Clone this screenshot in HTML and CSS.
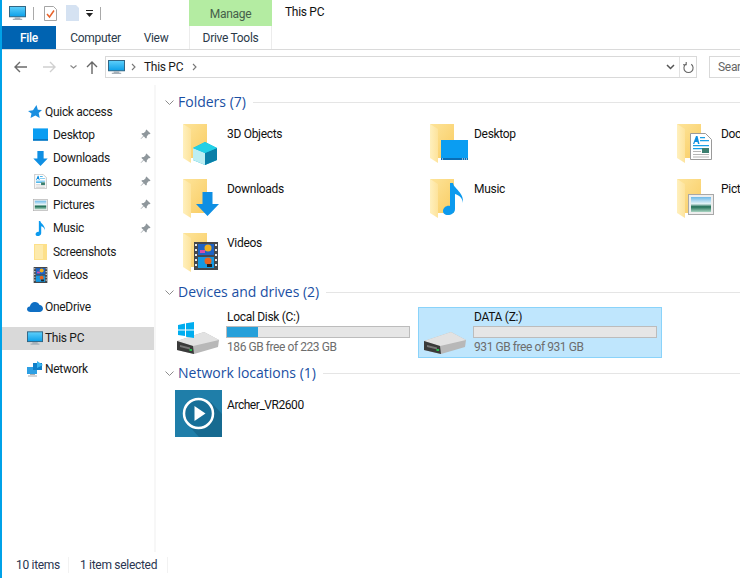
FILE: index.html
```html
<!DOCTYPE html>
<html lang="en">
<head>
<meta charset="utf-8">
<title>This PC</title>
<link rel="stylesheet" href="styles.css">
</head>
<body>
<svg class="defs" aria-hidden="true">
  <defs>
    <linearGradient id="fold" x1="0" y1="0" x2="1" y2="1"><stop offset="0" stop-color="#fde49a"/><stop offset="1" stop-color="#f9cc62"/></linearGradient>
    <linearGradient id="flap" x1="0" y1="0" x2="1" y2="0"><stop offset="0" stop-color="#fff0bd"/><stop offset="1" stop-color="#fde39c"/></linearGradient>
    <linearGradient id="scr" x1="0" y1="0" x2="0" y2="1"><stop offset="0" stop-color="#5fd0fb"/><stop offset="1" stop-color="#0b9fe8"/></linearGradient>
    <linearGradient id="sky" x1="0" y1="0" x2="0" y2="1"><stop offset="0" stop-color="#6db9e8"/><stop offset=".45" stop-color="#e4f3f6"/><stop offset=".65" stop-color="#1f6e55"/><stop offset="1" stop-color="#a9d5c2"/></linearGradient>
    <symbol id="folder" viewBox="0 0 48 48">
      <path d="M8 4h24v34H16v-2z" fill="url(#fold)"/>
      <path d="M8 4l8 5v34l-8-5z" fill="url(#flap)"/>
    </symbol>
    <symbol id="monitor" viewBox="0 0 18 16">
      <rect x=".5" y=".5" width="17" height="11" fill="url(#scr)" stroke="#2b5f7e"/>
      <path d="M6 12h6v1.500h2V15H4v-1.500h2z" fill="#a6b0b8"/>
    </symbol>
    <symbol id="film" viewBox="0 0 24 28">
      <rect width="24" height="28" fill="#45484c"/>
      <rect x="4" y="2" width="16" height="11" fill="#1e63c5"/>
      <rect x="4" y="15" width="16" height="11" fill="#1498e2"/>
      <circle cx="14" cy="6" r="3.500" fill="#f0b01e"/><circle cx="14" cy="19" r="3.500" fill="#e8641e"/>
      <rect x="6" y="8" width="5" height="3" fill="#d34fa8"/><rect x="13" y="22" width="5" height="3" fill="#222"/>
      <path d="M1 2h2v2H1zM1 7h2v2H1zM1 12h2v2H1zM1 17h2v2H1zM1 22h2v2H1zM21 2h2v2h-2zM21 7h2v2h-2zM21 12h2v2h-2zM21 17h2v2h-2zM21 22h2v2h-2z" fill="#e8e8e8"/>
    </symbol>
    <symbol id="docpage" viewBox="0 0 22 27">
      <path d="M.5.500h15l6 6v20H.5z" fill="#fff" stroke="#9a9a9a"/>
      <path d="M3 11l3-8h1.500l2 8H8l-.5-2H5l-.7 2z" fill="#0f8fe0"/>
      <path d="M10 4h5v1.200h-5zM10 7h9v1.200h-9zM3 12h16v1.300H3zM3 15h10v1.300H3z" fill="#19a0e6"/>
      <rect x="12" y="15" width="7" height="5" fill="#3b7f6f"/>
      <path d="M3 18h8v1H3zM3 21h16v1H3zM3 23.500h16v1H3z" fill="#b5b5b5"/>
    </symbol>
    <symbol id="picture" viewBox="0 0 26 21">
      <rect x=".5" y=".5" width="25" height="20" fill="#eee" stroke="#a8a8a8"/>
      <rect x="3" y="3" width="20" height="15" fill="url(#sky)"/>
    </symbol>
    <symbol id="note" viewBox="0 0 21 32">
      <path d="M7 0h3c1 6 11 9 10 20-.4-5-4-8-8-9v15c0 4-4 6-7 6-3.500 0-5-2-5-4 0-3.500 4-6 7-5z" fill="#0c9aee"/>
    </symbol>
    <symbol id="arrow" viewBox="0 0 23 24">
      <path d="M6.500 0h10v12H23L11.500 24 0 12h6.500z" fill="#0f8fe3"/>
    </symbol>
    <symbol id="drive" viewBox="0 0 48 48">
      <path d="M3 31L30 22l15 8-1 7-24 7-17-4z" fill="#b8b8b8"/>
      <path d="M3 31L30 22l15 8-26 6z" fill="#e2e2e2"/>
      <path d="M3 31l16 5 1 8-17-4z" fill="#3a3a3a"/>
      <path d="M6 35l10 2.500v2L6 37z" fill="#777"/>
      <rect x="15.500" y="39" width="2.500" height="2" fill="#27c24c"/>
    </symbol>
    <symbol id="pin" viewBox="0 0 12 12">
      <path d="M7 .5l4.500 4.500-1 .8-.8-.3L7.500 7.800 7.300 10 6 10 4.200 7.900 1 11l-.3-.3 3-3.300L1.800 5.700V4.500l2.400-.2 2.200-2.200-.2-.8z" fill="#8f979c"/>
    </symbol>
  </defs>
</svg>

<div class="window">
  <header class="head">
    <div class="titlerow">
      <div class="qat">
        <svg class="qat-mon"><use href="#monitor"/></svg>
        <span class="qat-sep"></span>
        <svg class="qat-check" viewBox="0 0 13 15"><path d="M.5.500h9l3 3v11H.5z" fill="#fff" stroke="#a5a5a5"/><path d="M3 8l2.500 3L10 4.500" fill="none" stroke="#e8622a" stroke-width="1.500"/></svg>
        <svg class="qat-doc" viewBox="0 0 13 16"><path d="M0 0h10l3 3v13H0z" fill="#d5e2f2"/></svg>
        <svg class="qat-drop" viewBox="0 0 7 7"><path d="M0 0h7v1H0zM0 3h7L3.500 7z" fill="#222"/></svg>
        <span class="qat-sep"></span>
      </div>
      <div class="manage">Manage</div>
      <div class="title">This PC</div>
    </div>
    <nav class="tabs">
      <div class="tab tab-file">File</div>
      <div class="tab tab-computer">Computer</div>
      <div class="tab tab-view">View</div>
      <div class="tab tab-drive">Drive Tools</div>
    </nav>
  </header>

  <div class="navrow">
    <div class="navbtns">
      <svg class="nav-back" viewBox="0 0 13 12"><path d="M13 6H1M6 1L1 6l5 5" fill="none" stroke="#6b6b6b" stroke-width="1.400"/></svg>
      <svg class="nav-fwd" viewBox="0 0 13 12"><path d="M0 6h12M7 1l5 5-5 5" fill="none" stroke="#d0d0d0" stroke-width="1.400"/></svg>
      <svg class="nav-down" viewBox="0 0 7 4"><path d="M.5.500L3.500 3l3-2.500" fill="none" stroke="#8a8a8a" stroke-width="1.200"/></svg>
      <svg class="nav-up" viewBox="0 0 12 13"><path d="M6 13V1M1 6l5-5 5 5" fill="none" stroke="#666" stroke-width="1.400"/></svg>
    </div>
    <div class="address">
      <svg class="addr-icon"><use href="#monitor"/></svg>
      <svg class="addr-chev" viewBox="0 0 5 8"><path d="M1 1l3 3-3 3" fill="none" stroke="#777" stroke-width="1.100"/></svg>
      <span class="addr-text">This PC</span>
      <svg class="addr-chev addr-chev2" viewBox="0 0 5 8"><path d="M1 1l3 3-3 3" fill="none" stroke="#777" stroke-width="1.100"/></svg>
      <svg class="addr-drop" viewBox="0 0 9 6"><path d="M1 1l3.500 3.500L8 1" fill="none" stroke="#555" stroke-width="1.500"/></svg>
      <div class="addr-refresh">
        <svg class="refresh-icon" viewBox="0 0 12 14"><path d="M3 3.500a5 5 0 1 0 6 0M3.500 1v3H0" fill="none" stroke="#666" stroke-width="1.200"/></svg>
      </div>
    </div>
    <div class="search">Search</div>
  </div>

  <div class="main">
    <aside class="side">
      <div class="row row-top">
        <svg class="ic-star" viewBox="0 0 14 14"><path d="M8.500 0l1.300 4.700 4.200.3-3.300 3 1 5-4.300-2.600L2.500 13l1-4.500L0 6l5-.7z" fill="#1a8fe0"/></svg>
        <span>Quick access</span>
      </div>
      <div class="row row-sub">
        <svg class="ic-box ic-desk" viewBox="0 0 16 13"><rect width="16" height="13" fill="#0a9df2"/><rect y="11.500" width="16" height="1.500" fill="#0a6db5"/></svg>
        <span class="grow">Desktop</span><svg class="pin"><use href="#pin"/></svg>
      </div>
      <div class="row row-sub">
        <svg class="ic-box ic-dl"><use href="#arrow"/></svg>
        <span class="grow">Downloads</span><svg class="pin"><use href="#pin"/></svg>
      </div>
      <div class="row row-sub">
        <svg class="ic-box ic-doc"><use href="#docpage"/></svg>
        <span class="grow">Documents</span><svg class="pin"><use href="#pin"/></svg>
      </div>
      <div class="row row-sub">
        <svg class="ic-box ic-pic"><use href="#picture"/></svg>
        <span class="grow">Pictures</span><svg class="pin"><use href="#pin"/></svg>
      </div>
      <div class="row row-sub">
        <svg class="ic-box ic-note"><use href="#note"/></svg>
        <span class="grow">Music</span><svg class="pin"><use href="#pin"/></svg>
      </div>
      <div class="row row-sub">
        <svg class="ic-box ic-fold" viewBox="0 0 13 16"><path d="M0 0h13v16H0z" fill="#fde08a"/><path d="M1 1h8v14H1z" fill="#fdeaac"/></svg>
        <span class="grow">Screenshots</span>
      </div>
      <div class="row row-sub">
        <svg class="ic-box ic-film"><use href="#film"/></svg>
        <span class="grow">Videos</span>
      </div>
      <div class="row row-top row-gap">
        <svg class="ic-cloud" viewBox="0 0 16 10"><path d="M3.500 10C1.500 10 0 8.800 0 7.200c0-1.500 1.200-2.600 2.800-2.700C3.300 2 5.400 0 8 0c2 0 3.600 1 4.300 2.700 2.100.2 3.700 1.900 3.700 3.800 0 2-1.600 3.500-3.700 3.500z" fill="#0f6fc4"/></svg>
        <span>OneDrive</span>
      </div>
      <div class="row row-top row-gap row-sel">
        <svg class="ic-mon"><use href="#monitor"/></svg>
        <span>This PC</span>
      </div>
      <div class="row row-top row-gap row-net">
        <svg class="ic-net" viewBox="0 0 16 16"><rect x="0" y="6" width="10" height="7" fill="#2e9fe3"/><rect x="6" y="2" width="9" height="7" fill="#0f7fc9"/><path d="M10 0l6 4-6 3z" fill="#39b3ee"/><path d="M3 13h5v1H3zM1 14.500h9v1H1z" fill="#a5acb2"/></svg>
        <span>Network</span>
      </div>
    </aside>

    <section class="content">
      <div class="group">
        <svg class="caret" viewBox="0 0 9 5"><path d="M.5.500L4.500 4.500l4-4" fill="none" stroke="#8c8c8c"/></svg>
        <span class="group-name">Folders (7)</span><span class="group-line"></span>
      </div>
      <div class="grid folders">
        <div class="item">
          <div class="ficon"><svg class="fbase"><use href="#folder"/></svg>
            <svg class="over ov-cube" viewBox="0 0 24 23"><path d="M0 6L12 0l12 6v12l-12 5-12-5z" fill="#13b3d8"/><path d="M0 6l12 5v12L0 18z" fill="#bdeef2"/><path d="M12 11l12-5v12l-12 5z" fill="#0a7fa8"/><path d="M12 0l12 6-12 5L0 6z" fill="#22d0e6"/></svg></div>
          <span class="iname">3D Objects</span>
        </div>
        <div class="item">
          <div class="ficon"><svg class="fbase"><use href="#folder"/></svg>
            <svg class="over ov-desk" viewBox="0 0 27 20"><rect width="27" height="20" fill="#0a9df2"/><rect y="18" width="27" height="2" fill="#0a6db5"/><path d="M1 18.500h1v1H1zM21 18.500h1v1h-1zM23 18.500h1v1h-1zM25 18.500h1v1h-1z" fill="#fff"/></svg></div>
          <span class="iname">Desktop</span>
        </div>
        <div class="item">
          <div class="ficon"><svg class="fbase"><use href="#folder"/></svg>
            <svg class="over ov-doc"><use href="#docpage"/></svg></div>
          <span class="iname">Documents</span>
        </div>
        <div class="item">
          <div class="ficon"><svg class="fbase"><use href="#folder"/></svg>
            <svg class="over ov-dl"><use href="#arrow"/></svg></div>
          <span class="iname">Downloads</span>
        </div>
        <div class="item">
          <div class="ficon"><svg class="fbase"><use href="#folder"/></svg>
            <svg class="over ov-note"><use href="#note"/></svg></div>
          <span class="iname">Music</span>
        </div>
        <div class="item">
          <div class="ficon"><svg class="fbase"><use href="#folder"/></svg>
            <svg class="over ov-pic"><use href="#picture"/></svg></div>
          <span class="iname">Pictures</span>
        </div>
        <div class="item">
          <div class="ficon"><svg class="fbase"><use href="#folder"/></svg>
            <svg class="over ov-film"><use href="#film"/></svg></div>
          <span class="iname">Videos</span>
        </div>
      </div>

      <div class="group">
        <svg class="caret" viewBox="0 0 9 5"><path d="M.5.500L4.500 4.500l4-4" fill="none" stroke="#8c8c8c"/></svg>
        <span class="group-name">Devices and drives (2)</span><span class="group-line"></span>
      </div>
      <div class="grid drives">
        <div class="tile">
          <div class="dicon"><svg class="dbase"><use href="#drive"/></svg>
            <svg class="over ov-win" viewBox="0 0 16 16"><path d="M0 3l7-1.500V7.500H0zM8 1.200L16 0v7.500H8zM0 8.500h7V14L0 13zM8 8.500h8V16l-8-1.200z" fill="#00adef"/></svg></div>
          <div class="dinfo">
            <div class="dname">Local Disk (C:)</div>
            <div class="bar"><div class="fill" style="width:17%"></div></div>
            <div class="dsub">186 GB free of 223 GB</div>
          </div>
        </div>
        <div class="tile tile-sel">
          <div class="dicon"><svg class="dbase"><use href="#drive"/></svg></div>
          <div class="dinfo">
            <div class="dname">DATA (Z:)</div>
            <div class="bar"></div>
            <div class="dsub">931 GB free of 931 GB</div>
          </div>
        </div>
      </div>

      <div class="group">
        <svg class="caret" viewBox="0 0 9 5"><path d="M.5.500L4.500 4.500l4-4" fill="none" stroke="#8c8c8c"/></svg>
        <span class="group-name">Network locations (1)</span><span class="group-line"></span>
      </div>
      <div class="netitem">
        <svg class="archer" viewBox="0 0 47 47"><rect width="47" height="47" fill="#1f7ea9"/><path d="M36 12L47 24v23H24L14 36z" fill="#176a90"/><circle cx="23.500" cy="23.500" r="14.500" fill="#176f98" stroke="#fff" stroke-width="2.500"/><path d="M19.500 16l11 7.500-11 7.500z" fill="#fff"/></svg>
        <span class="iname">Archer_VR2600</span>
      </div>
    </section>
  </div>

  <footer class="status">
    <span class="st-a">10 items</span><span class="st-sep"></span><span class="st-b">1 item selected</span><span class="st-sep"></span>
  </footer>
</div>
</body>
</html>
```

FILE: styles.css
```css
* { box-sizing: border-box; }
html, body { margin: 0; height: 100%; overflow: hidden; background: #fff; }
body { font: 12px/16px Roboto, "Open Sans", sans-serif; letter-spacing: -.3px; color: #1a1a1a; }
svg { display: block; flex: none; }
.defs { width: 0; height: 0; }
.window { height: 578px; width: 740px; border-left: 2px solid #00a2e8; display: flex; flex-direction: column; overflow: hidden; }

.head { height: 50px; border-bottom: 1px solid #dadada; flex: none; }
.titlerow { display: flex; height: 26px; }
.qat { width: 187px; display: flex; align-items: center; padding-left: 7px; }
.qat-mon { width: 17px; height: 15px; }
.qat-sep { width: 1px; height: 13px; background: #a9a9a9; margin: 0 0 0 7px; }
.qat-check { width: 13px; height: 15px; margin-left: 10px; }
.qat-doc { width: 13px; height: 16px; margin-left: 9px; }
.qat-drop { width: 7px; height: 7px; margin-left: 7px; }
.manage { width: 83px; background: #b4eca2; text-align: center; line-height: 28px; color: #46604a; }
.title { margin-left: 13px; line-height: 24px; color: #111; }
.tabs { display: flex; height: 23px; line-height: 25px; }
.tab { text-align: center; color: #2b3a4a; }
.tab-file { width: 54px; background: #0063b1; color: #fff; font-weight: 500; }
.tab-computer { width: 76px; padding-left: 3px; }
.tab-view { width: 50px; margin-left: -1px; }
.tab-drive { width: 83px; margin-left: 8px; border-left: 1px solid #ececec; border-right: 1px solid #ececec; }

.navrow { height: 35px; display: flex; align-items: flex-start; flex: none; }
.navbtns { width: 103px; height: 34px; display: flex; align-items: center; flex: none; }
.nav-back { width: 13px; height: 12px; margin-left: 12px; }
.nav-fwd { width: 13px; height: 12px; margin-left: 16px; }
.nav-down { width: 7px; height: 4px; margin-left: 14px; }
.nav-up { width: 12px; height: 13px; margin-left: 9px; }
.address { width: 592px; height: 22px; margin-top: 6px; border: 1px solid #d9d9d9; display: flex; align-items: center; padding-left: 2px; flex: none; }
.addr-icon { width: 17px; height: 15px; }
.addr-chev { width: 5px; height: 8px; margin-left: 6px; }
.addr-text { margin-left: 8px; }
.addr-chev2 { margin-left: 9px; }
.addr-drop { width: 9px; height: 6px; margin-left: auto; margin-right: 4px; }
.addr-refresh { width: 17px; height: 20px; border-left: 1px solid #e2e2e2; display: flex; align-items: center; justify-content: center; }
.refresh-icon { width: 11px; height: 13px; }
.search { width: 60px; height: 22px; margin-top: 6px; margin-left: 12px; border: 1px solid #d9d9d9; padding-left: 8px; line-height: 20px; color: #666; white-space: nowrap; flex: none; }

.main { flex: 1; display: flex; min-height: 0; }
.side { width: 152px; flex: none; padding-top: 15px; }
.row { height: 23.330px; display: flex; align-items: center; }
.row-top { padding-left: 26px; }
.row-sub { padding-left: 31px; }
.row-gap { margin-top: 8.400px; }
.row-net { margin-top: 7.400px; }
.row-sel { background: #d9d9d9; }
.grow { flex: 1; }
.ic-star { width: 14px; height: 14px; }
.ic-cloud { width: 16px; height: 10px; margin-left: -1px; }
.ic-mon { width: 16px; height: 15px; margin-left: -1px; }
.ic-net { width: 16px; height: 16px; margin-left: -1px; }
.row-top span { margin-left: 2px; }
.row-top .ic-star + span { margin-left: 3px; }
.ic-box { margin-right: 5px; width: 15px; height: 13px; }
.ic-dl { height: 15px; }
.ic-doc { height: 15px; }
.ic-pic { height: 12px; }
.ic-note { height: 15px; }
.ic-fold { height: 16px; }
.ic-film { height: 16px; }
.pin { width: 11px; height: 11px; margin-right: 3px; }

.content { flex: 1; min-width: 0; padding: 7px 0 0 1px; border-left: 2px solid #f7f7f7; }
.group { height: 20px; display: flex; align-items: center; padding-left: 8px; }
.caret { width: 9px; height: 5px; }
.group-name { font: 14px/20px "Open Sans", sans-serif; letter-spacing: 0; color: #1a4fa3; margin-left: 4px; white-space: nowrap; }
.group-line { flex: 1; height: 1px; background: #e5e5e5; margin-left: 7px; }

.grid { display: grid; grid-template-columns: repeat(3, 247px); }
.folders { padding: 8px 0 0 18px; grid-auto-rows: 54.500px; height: 170px; }
.item { display: flex; }
.ficon { width: 48px; height: 48px; display: grid; }
.fbase, .dbase { width: 48px; height: 48px; grid-area: 1 / 1; }
.over { grid-area: 1 / 1; }
.ov-cube { width: 24px; height: 23px; margin: 22px 0 0 18px; }
.ov-desk { width: 27px; height: 20px; margin: 20px 0 0 19px; }
.ov-doc { width: 22px; height: 27px; margin: 13px 0 0 21px; }
.ov-dl { width: 23px; height: 24px; margin: 17px 0 0 21px; }
.ov-note { width: 21px; height: 32px; margin: 8px 0 0 21px; }
.ov-pic { width: 26px; height: 21px; margin: 19px 0 0 19px; }
.ov-film { width: 24px; height: 28px; margin: 13px 0 0 19px; }
.ov-win { width: 16px; height: 16px; margin: 12px 0 0 4px; }
.iname { margin: 6px 0 0 4px; color: #111; white-space: nowrap; }

.drives { padding: 5px 0 0 14px; height: 61px; }
.tile { width: 244px; height: 51px; display: flex; border: 1px solid transparent; }
.tile-sel { background: #bfe6fd; border-color: #8ad3fa; }
.dicon { width: 48px; height: 48px; margin: 2px 0 0 2px; display: grid; }
.dinfo { margin-left: 4px; width: 184px; }
.dname { height: 16px; padding: 1px 0 0 1px; color: #111; }
.bar { height: 12px; margin-top: 2px; background: #e6e6e6; border: 1px solid #bcbcbc; }
.fill { height: 10px; background: #26a0da; }
.dsub { color: #6d6d6d; margin-top: 1px; padding-left: 1px; white-space: nowrap; letter-spacing: -.43px; }

.netitem { display: flex; padding: 7px 0 0 18px; height: 60px; }
.archer { width: 47px; height: 47px; }
.netitem .iname { margin: 7px 0 0 5px; letter-spacing: -.45px; }

.status { height: 26px; flex: none; display: flex; align-items: center; padding-left: 14px; color: #2a3550; }
.st-sep { width: 1px; height: 16px; background: #f2f2f2; }
.st-a { width: 52px; }
.st-b { margin-left: 11px; width: 87px; }
```
